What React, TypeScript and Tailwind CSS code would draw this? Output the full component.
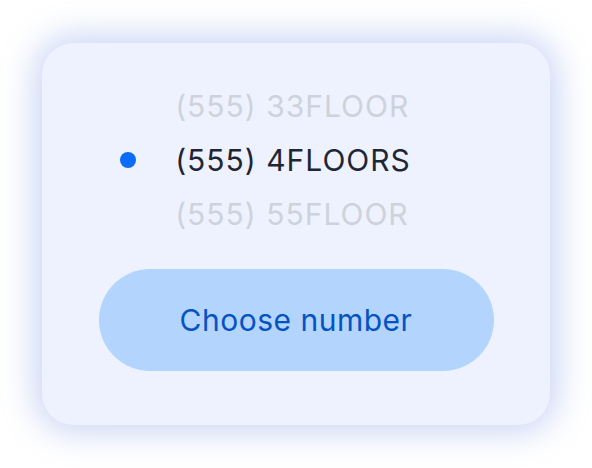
const numbers = [
  { label: '(555) 33FLOOR', selected: false },
  { label: '(555) 4FLOORS', selected: true },
  { label: '(555) 55FLOOR', selected: false },
];

export default function App() {
  return (
    <div className="w-[592px] h-[468px] bg-white flex items-center justify-center font-['Inter',sans-serif]">
      <div className="w-[508px] h-[382px] bg-[#eef2fe] rounded-[32px] shadow-[0_0_32px_8px_rgba(120,150,230,0.38)] flex flex-col items-center pt-[36px]">
        <ul className="flex flex-col pr-[6px]">
          {numbers.map((n) => (
            <li key={n.label} className="h-[54px] flex items-center relative">
              {n.selected && (
                <span className="absolute left-[-55px] w-[16px] h-[16px] rounded-full bg-[#0b6cf5]" />
              )}
              <span
                className={`text-[30px] leading-none tracking-[1px] ${
                  n.selected ? 'text-[#1f2633]' : 'text-[#cdd2dc]'
                }`}
              >
                {n.label}
              </span>
            </li>
          ))}
        </ul>
        <button className="mt-[28px] w-[395px] h-[102px] rounded-full bg-[#b2d4fd] text-[#0553c2] text-[30px] tracking-[0.5px]">
          Choose number
        </button>
      </div>
    </div>
  );
}
